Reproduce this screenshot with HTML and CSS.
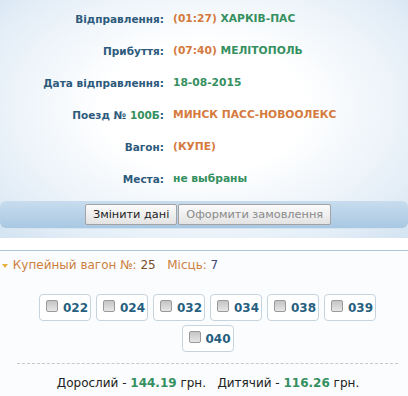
FILE: index.html
```html
<!DOCTYPE html>
<html lang="uk">
<head>
  <meta charset="UTF-8">
  <title>Замовлення квитка</title>
  <link rel="stylesheet" href="styles.css">
</head>
<body>
    <div class="trip">
        <div class="trip-info">
            <div class="label">Відправлення:</div>
            <div class="value"><span class="orange">(01:27)</span> <span class="green">ХАРКІВ-ПАС</span></div>

            <div class="label">Прибуття:</div>
            <div class="value"><span class="orange">(07:40)</span> <span class="green">МЕЛІТОПОЛЬ</span></div>

            <div class="label">Дата відправлення:</div>
            <div class="value green">18-08-2015</div>

            <div class="label">Поезд № <span class="green">100Б</span>:</div>
            <div class="value orange">МИНСК ПАСС-НОВООЛЕКС</div>

            <div class="label">Вагон:</div>
            <div class="value orange">(КУПЕ)</div>

            <div class="label">Места:</div>
            <div class="value green">не выбраны</div>
        </div>
        <div class="actions">
            <button class="btn">Змінити дані</button><button class="btn btn-disabled">Оформити замовлення</button>
        </div>
    </div>

    <div class="wagon">
        <div class="wagon-title">
            <span class="arrow"></span>
            Купейный вагон №: <span class="num">25</span>&nbsp;&nbsp; Місць: <span class="count">7</span>
        </div>
        <div class="seats">
            <label class="seat"><input type="checkbox"><span>022</span></label>
            <label class="seat"><input type="checkbox"><span>024</span></label>
            <label class="seat"><input type="checkbox"><span>032</span></label>
            <label class="seat"><input type="checkbox"><span>034</span></label>
            <label class="seat"><input type="checkbox"><span>038</span></label>
            <label class="seat"><input type="checkbox"><span>039</span></label>
            <label class="seat"><input type="checkbox"><span>040</span></label>
        </div>
        <div class="prices">
            Дорослий - <b>144.19</b> грн.&nbsp;&nbsp; Дитячий - <b>116.26</b> грн.
        </div>
    </div>
</body>
</html>
```

FILE: styles.css
```css
body {
    margin: 0;
    font-family: "DejaVu Sans", Verdana, sans-serif;
    background: #fff;
}

.trip {
    height: 238px;
    background: radial-gradient(ellipse at 50% 45%, #ffffff 35%, #e4eef7 80%, #d3e3f1 100%);
}

.trip-info {
    display: grid;
    grid-template-columns: 164px 1fr;
    column-gap: 9px;
    padding-top: 3px;
    font-size: 10.5px;
    font-weight: bold;
    line-height: 32px;
}

.label {
    text-align: right;
    color: #2e5a7c;
}

.value {
    font-size: 10.7px;
}

.orange {
    color: #d57a3e;
}

.green {
    color: #35905f;
}

.actions {
    margin-top: 6px;
    height: 27px;
    padding-left: 8px;
    display: flex;
    justify-content: center;
    align-items: center;
    border-radius: 6px;
    background: linear-gradient(#c8dcee, #a9c8e3);
    box-shadow: 0 1px 0 #d5e4f1;
}

.btn {
    height: 21px;
    padding: 0 7px;
    margin: 0;
    font-family: "DejaVu Sans", Verdana, sans-serif;
    font-size: 11.3px;
    color: #222;
    background: linear-gradient(#fbfbfb, #e3e3e3);
    border: 1px solid #a3a3a3;
    border-radius: 2px;
}

.btn + .btn {
    margin-left: 1px;
}

.btn-disabled {
    color: #8a8a8a;
}

.wagon {
    margin-top: 12px;
    border-top: 1px solid #a9c6da;
    background: #fafcfd;
    height: 150px;
}

.wagon-title {
    padding: 7px 0 0 2px;
    font-size: 12px;
    color: #cc8040;
}

.arrow {
    display: inline-block;
    width: 0;
    height: 0;
    border-left: 3px solid transparent;
    border-right: 3px solid transparent;
    border-top: 4px solid #e8b040;
    vertical-align: middle;
    margin-right: 1px;
}

.num {
    color: #7a4f2a;
}

.count {
    color: #3e4b7a;
}

.seats {
    display: flex;
    flex-wrap: wrap;
    justify-content: center;
    gap: 4px 5px;
    margin: 22px 10px 0 17px;
    padding-bottom: 11px;
    border-bottom: 1px dashed #c8c8c8;
}

.seat {
    box-sizing: border-box;
    width: 52px;
    height: 27px;
    padding-left: 6px;
    display: flex;
    align-items: center;
    border: 1px solid #c6d4dd;
    border-radius: 4px;
    background: #fff;
    font-size: 12px;
    font-weight: bold;
    color: #27607f;
}

.seat input {
    appearance: none;
    box-sizing: border-box;
    width: 12px;
    height: 12px;
    margin: -4px 5px 0 0;
    border: 1px solid #9a9a9a;
    border-radius: 2px;
    background: linear-gradient(#c4c4c4, #e6e6e6);
}

.prices {
    text-align: center;
    padding: 12px 0 0 8px;
    font-size: 12px;
    color: #222;
}

.prices b {
    color: #35905f;
}
```
